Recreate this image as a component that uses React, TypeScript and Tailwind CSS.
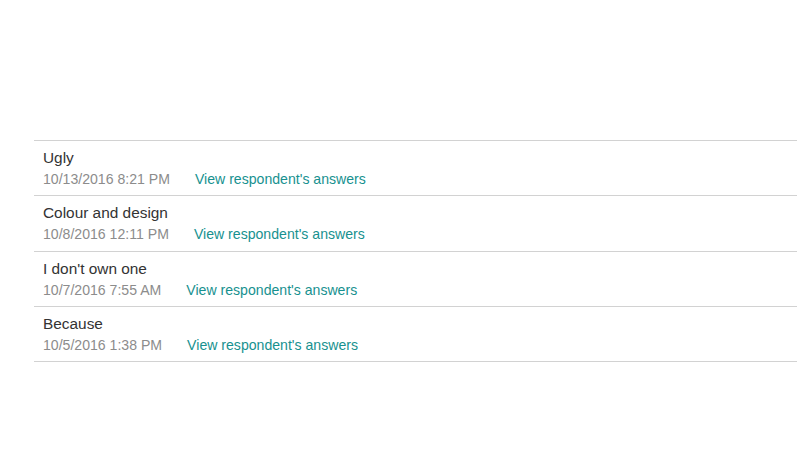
const responses = [
  { text: "Ugly", date: "10/13/2016 8:21 PM" },
  { text: "Colour and design", date: "10/8/2016 12:11 PM" },
  { text: "I don't own one", date: "10/7/2016 7:55 AM" },
  { text: "Because", date: "10/5/2016 1:38 PM" },
];

export default function App() {
  return (
    <div className="w-[800px] h-[450px] bg-white font-['Liberation_Sans',Arial,sans-serif] pt-[140px] pl-[34px] pr-[3px]">
      <ul className="border-b border-[#d2d2d2]">
        {responses.map((r, i) => (
          <li key={i} className="border-t border-[#d2d2d2] pl-[9px] pt-[8px] pb-[8.25px]">
            <div className="text-[15.4px] leading-[18px] text-[#333333]">{r.text}</div>
            <div className="mt-[4px] flex text-[14.1px] leading-[16px]">
              <span className="text-[#8c8c8c]">{r.date}</span>
              <a href="#" className="ml-[25px] text-[#17918f]">
                View respondent's answers
              </a>
            </div>
          </li>
        ))}
      </ul>
    </div>
  );
}
